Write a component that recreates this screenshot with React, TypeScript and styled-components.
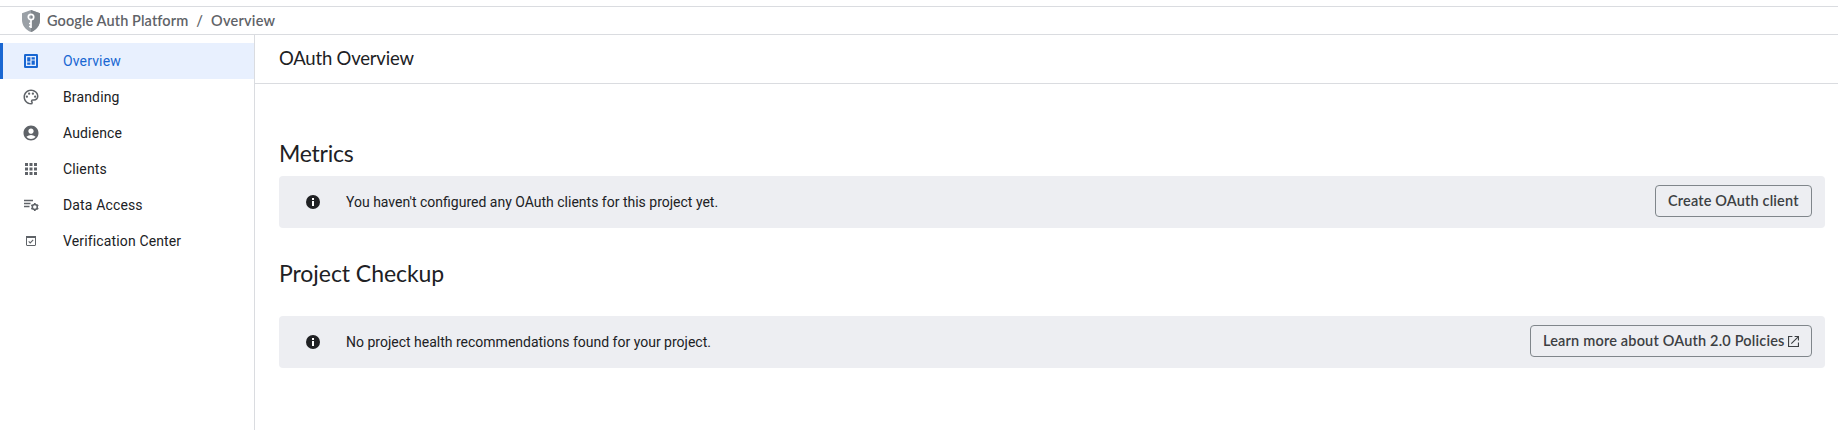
import React from "react";
import styled, { createGlobalStyle } from "styled-components";
import { MdAccountCircle, MdApps, MdOutlinePalette } from "react-icons/md";

const display = `"Google Sans", Lato, "Liberation Sans", sans-serif`;

const GlobalStyle = createGlobalStyle`
  * { box-sizing: border-box; }
  body {
    margin: 0;
    background: #fff;
    color: #202124;
    font: 400 14px/20px Roboto, "Liberation Sans", sans-serif;
  }
`;

const Page = styled.div`
  display: flex;
  flex-direction: column;
  height: 430px;
  padding-top: 6px;
  overflow: hidden;
`;

const Breadcrumbs = styled.nav`
  display: flex;
  align-items: center;
  flex: none;
  height: 29px;
  padding-left: 21px;
  border: solid #dadce0;
  border-width: 1px 0;
  color: #5f6368;
  font: 600 14.5px/20px ${display};
`;

const Crumb = styled.span<{ $gap: number; $spacing: number }>`
  margin-left: ${(p) => p.$gap}px;
  letter-spacing: ${(p) => p.$spacing}px;
  white-space: nowrap;
`;

const Body = styled.div`
  display: flex;
  flex: 1;
`;

const Sidebar = styled.aside`
  flex: none;
  width: 255px;
  padding-top: 8px;
  border-right: 1px solid #dadce0;
`;

const NavItem = styled.a<{ $active?: boolean }>`
  display: flex;
  align-items: center;
  height: 36px;
  border-left: 3px solid ${(p) => (p.$active ? "#1967d2" : "transparent")};
  background: ${(p) => (p.$active ? "#e8f0fe" : "transparent")};
  color: ${(p) => (p.$active ? "#1967d2" : "#202124")};
  letter-spacing: 0.14px;
`;

const NavIcon = styled.span<{ $active?: boolean }>`
  display: flex;
  width: 18px;
  margin: 0 23px 0 19px;
  color: ${(p) => (p.$active ? "#1967d2" : "#5f6368")};
`;

const Main = styled.main`
  flex: 1;
`;

const TitleBar = styled.header`
  display: flex;
  align-items: center;
  height: 49px;
  padding: 0 0 3px 24px;
  border-bottom: 1px solid #dadce0;
`;

const Title = styled.h1`
  margin: 0;
  font: 400 18.5px/24px ${display};
  letter-spacing: -0.2px;
`;

const Content = styled.div`
  padding: 55px 13px 0 24px;
`;

const SectionTitle = styled.h2<{ $gap: number; $spacing: number }>`
  margin: 0 0 ${(p) => p.$gap}px;
  font: 400 23px/28px ${display};
  letter-spacing: ${(p) => p.$spacing}px;
`;

const Banner = styled.section`
  display: flex;
  align-items: center;
  height: 52px;
  margin-bottom: 31px;
  padding: 0 13px 0 27px;
  border-radius: 4px;
  background: #edeef2;
`;

const Message = styled.p`
  flex: 1;
  margin: 0 0 0 26px;
`;

const OutlineButton = styled.button<{ $width: number; $spacing: number }>`
  display: flex;
  align-items: center;
  justify-content: space-between;
  width: ${(p) => p.$width}px;
  height: 32px;
  margin-bottom: 2px;
  padding: 0 12px;
  border: 1px solid #80868b;
  border-radius: 4px;
  background: transparent;
  color: #3c4043;
  font: 600 14.5px/20px ${display};
  letter-spacing: ${(p) => p.$spacing}px;
  white-space: nowrap;
`;

const ShieldIcon = () => (
  <svg width="20" height="22" viewBox="0 0 20 22">
    <path d="M10 0 19 3.2V10c0 5.400-3.600 10-9 12C4.600 20 1 15.400 1 10V3.200Z" fill="#9aa0a6" />
    <path d="M10 0 19 3.200V10c0 5.400-3.600 10-9 12Z" fill="#80868b" />
    <circle cx="10" cy="7" r="2.700" fill="none" stroke="#fff" strokeWidth="1.700" />
    <path d="M10 9.500V18M10.500 13.500H8M10.500 16.500H8" fill="none" stroke="#fff" strokeWidth="1.700" />
  </svg>
);

const OverviewIcon = () => (
  <svg width="18" height="18" viewBox="0 0 18 18">
    <rect x="2" y="2" width="14" height="14" rx="1.200" fill="currentColor" />
    <path d="M4 4h10v10H4z" fill="#e8f0fe" />
    <path d="M5.200 5.200h3.200v4.300H5.200zM9.600 5.200h3.200v2.300H9.600zM5.200 10.600h3.200v2.200H5.200zM9.600 8.600h3.200v4.200H9.600z" fill="currentColor" />
  </svg>
);

const DataAccessIcon = () => (
  <svg width="18" height="18" viewBox="0 0 18 18" fill="none" stroke="currentColor">
    <path d="M2 4.500h9M2 7.500h6.500M2 10.500h5.500" strokeWidth="1.300" />
    <circle cx="12.800" cy="11" r="2.500" strokeWidth="1.500" />
    <path
      d="M12.800 7v1.500M12.800 13.500V15M9.350 9l1.300.75M14.950 12.250l1.300.75M16.250 9l-1.300.75M10.650 12.250l-1.300.75"
      strokeWidth="1.700"
    />
  </svg>
);

const VerificationIcon = () => (
  <svg width="18" height="18" viewBox="0 0 18 18" fill="none" stroke="currentColor">
    <rect x="4.500" y="4.500" width="9" height="9" rx=".5" />
    <path d="M4 5h10" strokeWidth="2" />
    <path d="m6.700 9.400 1.500 1.500 3-3" strokeWidth="1.100" />
  </svg>
);

const InfoIcon = () => (
  <svg width="14" height="14" viewBox="0 0 14 14">
    <circle cx="7" cy="7" r="7" fill="#202124" />
    <path d="M6 3h2v2H6zM6 6h2v5H6z" fill="#fff" />
  </svg>
);

const ExternalIcon = () => (
  <svg width="11" height="11" viewBox="0 0 10 10" fill="none" stroke="currentColor">
    <path d="M4 .5H.5v9h9V6M6 .5h3.500V4M9.500.5l-6.500 6.500" />
  </svg>
);

const navItems = [
  { label: "Overview", icon: <OverviewIcon />, active: true },
  { label: "Branding", icon: <MdOutlinePalette size={18} /> },
  { label: "Audience", icon: <MdAccountCircle size={18} /> },
  { label: "Clients", icon: <MdApps size={18} /> },
  { label: "Data Access", icon: <DataAccessIcon /> },
  { label: "Verification Center", icon: <VerificationIcon /> },
];

export default function App() {
  return (
    <>
      <GlobalStyle />
      <Page>
        <Breadcrumbs>
          <ShieldIcon />
          <Crumb $gap={6} $spacing={0.1}>Google Auth Platform</Crumb>
          <Crumb $gap={8} $spacing={0}>/</Crumb>
          <Crumb $gap={8} $spacing={0.25}>Overview</Crumb>
        </Breadcrumbs>
        <Body>
          <Sidebar>
            {navItems.map(({ label, icon, active }) => (
              <NavItem key={label} $active={active}>
                <NavIcon $active={active}>{icon}</NavIcon>
                {label}
              </NavItem>
            ))}
          </Sidebar>
          <Main>
            <TitleBar>
              <Title>OAuth Overview</Title>
            </TitleBar>
            <Content>
              <SectionTitle $gap={9} $spacing={-0.25}>Metrics</SectionTitle>
              <Banner>
                <InfoIcon />
                <Message>You haven't configured any OAuth clients for this project yet.</Message>
                <OutlineButton $width={157} $spacing={0.16}>Create OAuth client</OutlineButton>
              </Banner>
              <SectionTitle $gap={29} $spacing={-0.06}>Project Checkup</SectionTitle>
              <Banner>
                <InfoIcon />
                <Message>No project health recommendations found for your project.</Message>
                <OutlineButton $width={282} $spacing={0.18}>
                  Learn more about OAuth 2.0 Policies
                  <ExternalIcon />
                </OutlineButton>
              </Banner>
            </Content>
          </Main>
        </Body>
      </Page>
    </>
  );
}
